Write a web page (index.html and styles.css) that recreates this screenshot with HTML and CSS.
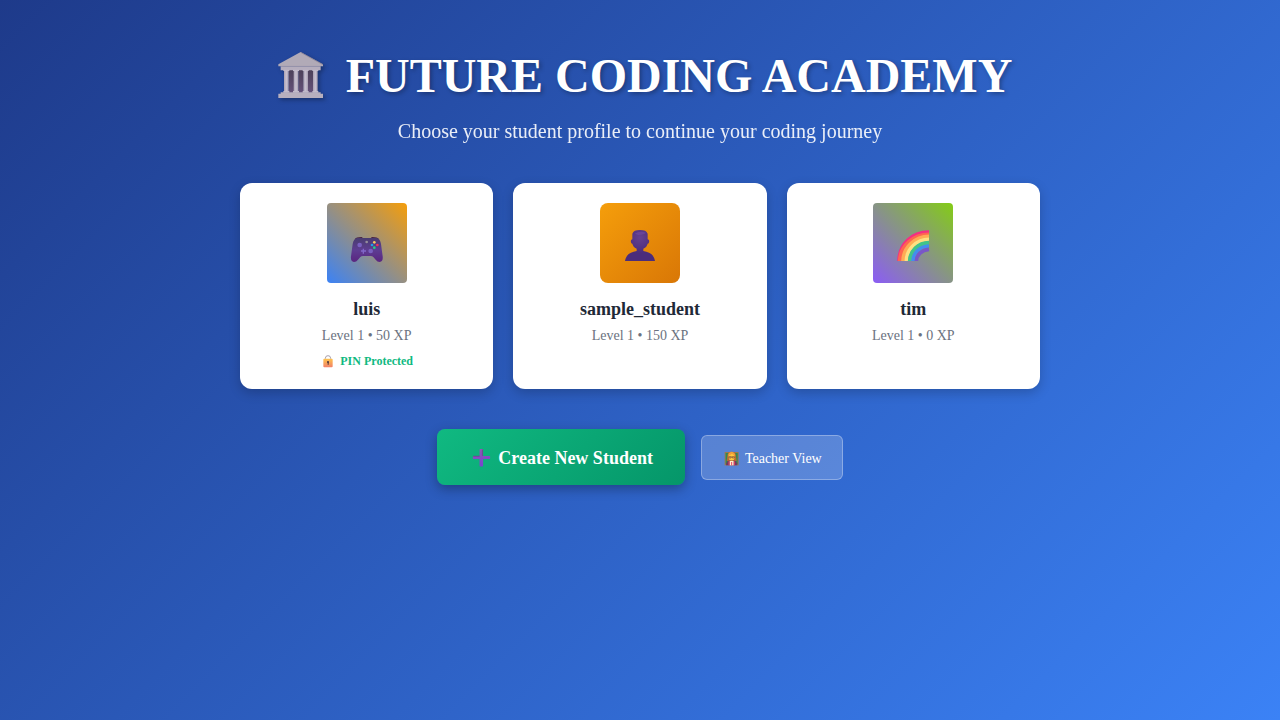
FILE: index.html
```html
<!DOCTYPE html>
<html lang="en">
<head>
<meta charset="utf-8">
<title>Future Coding Academy</title>
<link rel="stylesheet" href="styles.css">
</head>
<body>
<main class="container">
  <header class="header">
    <h1>
      <svg class="logo" viewBox="9 33 198 150" aria-hidden="true">
        <defs>
          <linearGradient id="stone"><stop offset="0" stop-color="#a9a1b3"/><stop offset=".5" stop-color="#c9c1d1"/><stop offset="1" stop-color="#a59cb0"/></linearGradient>
          <linearGradient id="wall" x2="0" y2="1"><stop offset="0" stop-color="#4b4058"/><stop offset="1" stop-color="#65517a"/></linearGradient>
        </defs>
        <path fill="url(#wall)" d="M71 88h16v70H71zM100 88h16v70h-16zM129 88h16v70h-16z"/>
        <path fill="#b1aab7" d="M107 36 174 73v6H40v-6z"/>
        <path fill="none" stroke="#857c8e" stroke-width="2" d="M107 37 174 74"/>
        <path fill="#b5adbd" d="M47 79h120v12H47z"/>
        <path stroke="#968da0" stroke-width="1" d="M46 79h122"/>
        <g fill="url(#stone)"><path d="M57 90h14v68H57z"/><path d="M86 90h14v68H86z"/><path d="M115 90h14v68h-14z"/><path d="M144 90h14v68h-14z"/></g>
        <path fill="#c1b9c9" d="M55 89h18v4H55zM84 89h18v4H84zM113 89h18v4h-18zM142 89h18v4h-18zM55 153h18v5H55zM84 153h18v5H84zM113 153h18v5h-18zM142 153h18v5h-18z"/>
        <path fill="#b7afbe" d="M47 157h120v4h7v13H40v-13h7z"/>
      </svg>
      <span>FUTURE CODING ACADEMY</span>
    </h1>
    <p>Choose your student profile to continue your coding journey</p>
  </header>
  <section class="grid">
    <button class="card" type="button">
      <svg class="avatar luis" viewBox="30 30 240 240" aria-hidden="true">
        <defs><linearGradient id="pad" x2="0" y2="1"><stop offset="0" stop-color="#493c70"/><stop offset=".5" stop-color="#5e3d92"/><stop offset="1" stop-color="#5a2580"/></linearGradient></defs>
        <path fill="#4b2543" d="M113 139q5-8 23-7v8h27v-8q18-1 23 7z"/>
        <path fill="url(#pad)" d="M121 135h58q10 1 13 18l5 37q2 16-9 17-7 0-12-7l-7-8q-3-3-8-3h-23q-5 0-8 3l-7 8q-5 7-12 7-11-1-9-17l5-37q3-17 14-18z"/>
        <circle cx="128" cy="156" r="7" fill="#7960c0"/><circle cx="161" cy="174" r="7" fill="#7960c0"/>
        <path stroke="#8267c9" stroke-width="4" d="M132 174h15M139 167v15"/>
        <circle cx="149" cy="147" r="4" fill="#958d9c"/>
        <circle cx="172" cy="148" r="4" fill="#f9c85d"/><circle cx="181" cy="156" r="4" fill="#f32f5c"/><circle cx="172" cy="164" r="4" fill="#26cf87"/><circle cx="165" cy="156" r="4" fill="#229fe6"/>
      </svg>
      <span class="name">luis</span><span class="level">Level 1 • 50 XP</span>
      <span class="pin">
        <svg class="lock" viewBox="257 189 48 48" aria-hidden="true">
          <defs><linearGradient id="gold" x2="0" y2="1"><stop offset="0" stop-color="#ffc44c"/><stop offset="1" stop-color="#f18069"/></linearGradient></defs>
          <path fill="none" stroke="#aaa1ae" stroke-width="3" d="M273 210v-5q0-8 8-8t8 8v5"/>
          <rect x="267" y="206" width="28" height="26" rx="3" fill="url(#gold)"/>
          <circle cx="281" cy="216" r="3" fill="#49303b"/><path fill="#49303b" d="M280 217h3v7h-3z"/>
        </svg>
        PIN Protected
      </span>
    </button>
    <button class="card" type="button">
      <svg class="avatar sample" viewBox="30 30 240 240" aria-hidden="true">
        <defs><radialGradient id="bust" cy=".25"><stop offset="0" stop-color="#65418f"/><stop offset="1" stop-color="#4b2c7b"/></radialGradient></defs>
        <path fill="url(#bust)" d="M105 204C108 185 121 177 140 174V167C132 163 129 159 127 152C121 152 121 139 127 139V122C130 114 137 111 150 111S170 114 173 122V139C179 139 179 152 173 152C171 159 168 163 160 167V174C179 177 192 185 195 204Z"/>
        <path fill="#704aa0" opacity=".65" d="M134 122q15-9 34-3-6 6-23 7z"/>
      </svg>
      <span class="name">sample_student</span><span class="level">Level 1 • 150 XP</span>
    </button>
    <button class="card" type="button">
      <svg class="avatar tim" viewBox="30 30 240 240" aria-hidden="true">
        <g fill="none" stroke-width="11">
          <path stroke="#f52e83" d="M108 204c1-50 38-87 90-87"/>
          <path stroke="#ff6550" d="M110 204c2-46 41-80 88-80"/>
          <path stroke="#ffac54" d="M120 204c1-42 36-73 78-74"/>
          <path stroke="#ffe082" d="M130 204c1-36 30-64 68-65"/>
          <path stroke="#42c489" d="M140 204c1-31 25-54 58-55"/>
          <path stroke="#438eee" d="M150 204c1-25 20-44 48-45"/>
          <path stroke="#7957c7" d="M160 204c1-18 15-33 38-35"/>
        </g>
      </svg>
      <span class="name">tim</span><span class="level">Level 1 • 0 XP</span>
    </button>
  </section>
  <div class="actions">
    <button class="create" type="button">
      <svg class="plus" viewBox="117 77 75 75" aria-hidden="true">
        <defs><linearGradient id="violet" x2="0" y2="1"><stop offset="0" stop-color="#9058b5"/><stop offset="1" stop-color="#7744cf"/></linearGradient></defs>
        <path fill="url(#violet)" d="M152 86h7q2 0 2 2v20h20q2 0 2 2v6q0 2-2 2h-20v21q0 2-2 2h-7q-2 0-2-2v-21h-19q-2 0-2-2v-6q0-2 2-2h19V88q0-2 2-2z"/>
        <path stroke="#604579" stroke-width="2" d="M130 109h20M159 88v20"/>
      </svg>
      Create New Student
    </button>
    <button class="teacher" type="button">
      <svg class="tutor" viewBox="97 71 54 54" aria-hidden="true">
        <path fill="#9b7950" d="M105 80h42v40h-42z"/><path fill="#318b52" d="M108 83h36v34h-36z"/>
        <path fill="#b66b35" d="M113 92q0-13 13-13t13 13l2 15h-30z"/>
        <ellipse cx="126" cy="94" rx="9" ry="12" fill="#ffc83e"/>
        <path fill="#efa03c" d="M115 91q1-11 11-12 10 1 11 12-6-1-10-6-4 5-12 6z"/>
        <path fill="none" stroke="#754943" stroke-width="2" d="M118 94h6v4h-6zm10 0h6v4h-6zM124 95h4"/>
        <path fill="#713b60" d="M109 120q0-14 10-14h14q10 0 10 14z"/>
        <path fill="#fff0cd" d="M120 107h12v13h-12z"/><path stroke="#e94164" stroke-width="3" d="M118 108v12M126 110v10M134 108v12"/>
      </svg>
      Teacher View
    </button>
  </div>
</main>
</body>
</html>
```
FILE: styles.css
```css
* { box-sizing: border-box; margin: 0; }
body { min-height: 100vh; padding: 40px 20px; font-family: "Liberation Serif", serif; background: linear-gradient(135deg, #1e3a8a, #3b82f6); color: #fff; }
button { font: inherit; cursor: pointer; }
svg { flex: none; }
.container { max-width: 800px; margin: 0 auto; text-align: center; }
.header { margin-bottom: 40px; }
h1 { display: flex; align-items: center; justify-content: center; gap: 12px; padding-top: 1px; font-size: 48px; line-height: 70px; margin-bottom: 9px; text-shadow: 2px 2px 4px rgba(0,0,0,.3); }
.logo { width: 66px; height: 50px; filter: drop-shadow(2px 2px 2px rgba(0,0,0,.3)); }
.header p { font-size: 20px; line-height: 23px; opacity: .9; }
.grid { display: grid; grid-template-columns: repeat(3, 1fr); gap: 20px; margin-bottom: 40px; }
.card { display: flex; flex-direction: column; align-items: center; justify-content: flex-start; padding: 20px; border: 0; border-radius: 12px; background: #fff; color: #1f2937; box-shadow: 0 4px 12px rgba(0,0,0,.2); }
.avatar { width: 80px; height: 80px; margin-bottom: 16px; border-radius: 4px; }
.luis { background: linear-gradient(45deg, #3b82f6, #f59e0b); }
.sample { border-radius: 8px; background: linear-gradient(135deg, #f59e0b, #d97706); }
.tim { background: linear-gradient(45deg, #8b5cf6, #84cc16); }
.name { font-size: 18px; line-height: 20px; font-weight: bold; margin-bottom: 8px; }
.level { font-size: 14px; line-height: 18px; color: #6b7280; margin-bottom: 8px; }
.pin { display: flex; align-items: center; gap: 4px; font-size: 12px; line-height: 16px; font-weight: bold; color: #10b981; }
.lock { width: 16px; height: 16px; }
.actions { display: flex; align-items: center; justify-content: center; gap: 16px; }
.create, .teacher { display: flex; align-items: center; gap: 5px; color: #fff; }
.create { padding: 17px 32px 15px; border: 0; border-radius: 8px; font-size: 18px; line-height: 24px; font-weight: bold; background: linear-gradient(135deg, #10b981, #059669); box-shadow: 0 4px 12px rgba(0,0,0,.3); }
.plus { width: 24px; height: 24px; }
.teacher { padding: 13px 20px 11px; border: 1px solid rgba(255,255,255,.3); border-radius: 6px; font-size: 14px; line-height: 19px; background: rgba(255,255,255,.2); }
.tutor { width: 18px; height: 18px; }
```
